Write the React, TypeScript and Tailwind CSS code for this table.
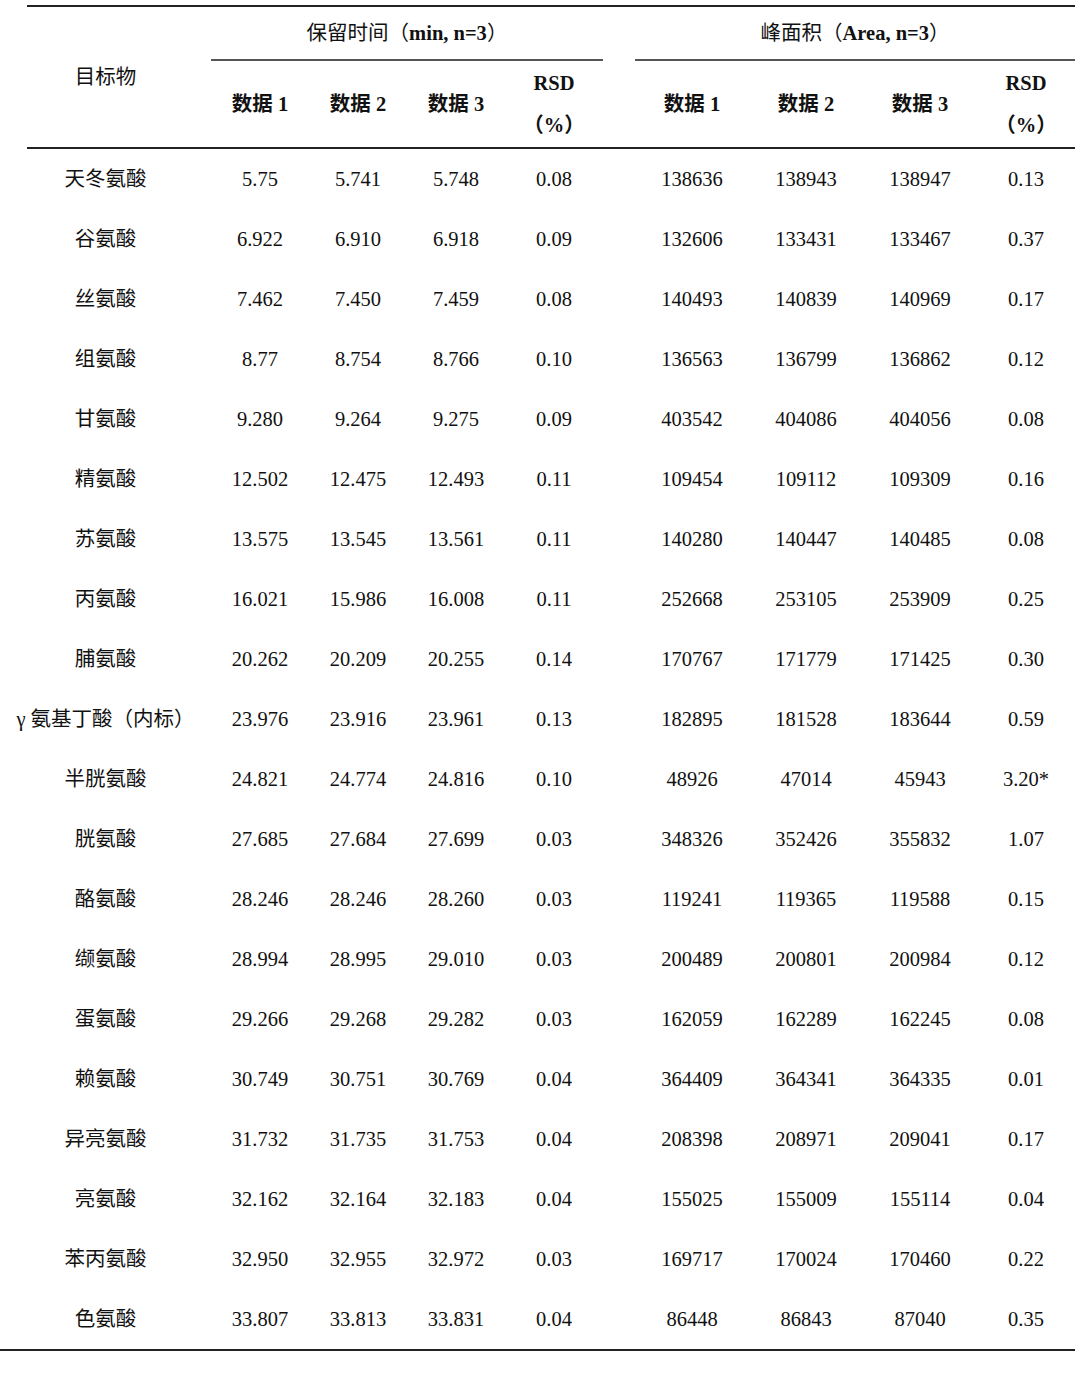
import React from "react";

const rows: string[][] = [
  ["天冬氨酸", "5.75", "5.741", "5.748", "0.08", "138636", "138943", "138947", "0.13"],
  ["谷氨酸", "6.922", "6.910", "6.918", "0.09", "132606", "133431", "133467", "0.37"],
  ["丝氨酸", "7.462", "7.450", "7.459", "0.08", "140493", "140839", "140969", "0.17"],
  ["组氨酸", "8.77", "8.754", "8.766", "0.10", "136563", "136799", "136862", "0.12"],
  ["甘氨酸", "9.280", "9.264", "9.275", "0.09", "403542", "404086", "404056", "0.08"],
  ["精氨酸", "12.502", "12.475", "12.493", "0.11", "109454", "109112", "109309", "0.16"],
  ["苏氨酸", "13.575", "13.545", "13.561", "0.11", "140280", "140447", "140485", "0.08"],
  ["丙氨酸", "16.021", "15.986", "16.008", "0.11", "252668", "253105", "253909", "0.25"],
  ["脯氨酸", "20.262", "20.209", "20.255", "0.14", "170767", "171779", "171425", "0.30"],
  ["γ 氨基丁酸（内标）", "23.976", "23.916", "23.961", "0.13", "182895", "181528", "183644", "0.59"],
  ["半胱氨酸", "24.821", "24.774", "24.816", "0.10", "48926", "47014", "45943", "3.20*"],
  ["胱氨酸", "27.685", "27.684", "27.699", "0.03", "348326", "352426", "355832", "1.07"],
  ["酪氨酸", "28.246", "28.246", "28.260", "0.03", "119241", "119365", "119588", "0.15"],
  ["缬氨酸", "28.994", "28.995", "29.010", "0.03", "200489", "200801", "200984", "0.12"],
  ["蛋氨酸", "29.266", "29.268", "29.282", "0.03", "162059", "162289", "162245", "0.08"],
  ["赖氨酸", "30.749", "30.751", "30.769", "0.04", "364409", "364341", "364335", "0.01"],
  ["异亮氨酸", "31.732", "31.735", "31.753", "0.04", "208398", "208971", "209041", "0.17"],
  ["亮氨酸", "32.162", "32.164", "32.183", "0.04", "155025", "155009", "155114", "0.04"],
  ["苯丙氨酸", "32.950", "32.955", "32.972", "0.03", "169717", "170024", "170460", "0.22"],
  ["色氨酸", "33.807", "33.813", "33.831", "0.04", "86448", "86843", "87040", "0.35"],
];

const cols = "grid grid-cols-[211px_98px_98px_98px_98px_32px_114px_114px_114px_98px]";

export default function App() {
  return (
    <div
      className="w-[1080px] h-[1376px] bg-white text-[#111] text-[20.5px] pt-[5px]"
      style={{ fontFamily: '"Liberation Serif", "Noto Sans CJK SC", serif' }}
    >
      <div className="w-[1075px]">
        <div className="ml-[27px] h-[2px] bg-[#222]" />
        <div className={`${cols} grid-rows-[52px_2px_86px]`}>
          <div className="row-span-3 flex items-center justify-center">目标物</div>
          <div className="col-span-4 flex items-center justify-center">
            保留时间（<b>min, n=3</b>）
          </div>
          <div />
          <div className="col-span-4 flex items-center justify-center">
            峰面积（<b>Area, n=3</b>）
          </div>
          <div className="col-span-4 bg-[#555]" />
          <div />
          <div className="col-span-4 bg-[#555]" />
          <div className="flex items-center justify-center font-bold">数据 1</div>
          <div className="flex items-center justify-center font-bold">数据 2</div>
          <div className="flex items-center justify-center font-bold">数据 3</div>
          <div className="flex flex-col items-center justify-center font-bold leading-[42px]">
            <span>RSD</span>
            <span>（%）</span>
          </div>
          <div />
          <div className="flex items-center justify-center font-bold">数据 1</div>
          <div className="flex items-center justify-center font-bold">数据 2</div>
          <div className="flex items-center justify-center font-bold">数据 3</div>
          <div className="flex flex-col items-center justify-center font-bold leading-[42px]">
            <span>RSD</span>
            <span>（%）</span>
          </div>
        </div>
        <div className="ml-[27px] h-[2px] bg-[#222]" />
        {rows.map((r, i) => (
          <div key={i} className={`${cols} h-[60px]`}>
            <div className="flex items-center justify-center whitespace-nowrap">{r[0]}</div>
            <div className="flex items-center justify-center">{r[1]}</div>
            <div className="flex items-center justify-center">{r[2]}</div>
            <div className="flex items-center justify-center">{r[3]}</div>
            <div className="flex items-center justify-center">{r[4]}</div>
            <div />
            <div className="flex items-center justify-center">{r[5]}</div>
            <div className="flex items-center justify-center">{r[6]}</div>
            <div className="flex items-center justify-center">{r[7]}</div>
            <div className="flex items-center justify-center">{r[8]}</div>
          </div>
        ))}
        <div className="h-[2px] bg-[#222]" />
      </div>
    </div>
  );
}
